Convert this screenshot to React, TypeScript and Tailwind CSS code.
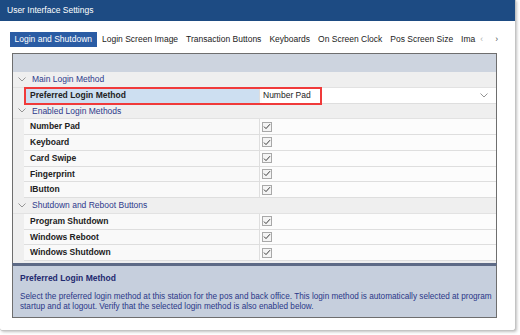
import React from 'react';

const TABS = ['Login Screen Image', 'Transaction Buttons', 'Keyboards', 'On Screen Clock', 'Pos Screen Size', 'Ima'];

type Row =
  | { kind: 'cat'; label: string }
  | { kind: 'prop'; label: string; value?: string; check?: boolean; selected?: boolean };

const ROWS: Row[] = [
  { kind: 'cat', label: 'Main Login Method' },
  { kind: 'prop', label: 'Preferred Login Method', value: 'Number Pad', selected: true },
  { kind: 'cat', label: 'Enabled Login Methods' },
  { kind: 'prop', label: 'Number Pad', check: true },
  { kind: 'prop', label: 'Keyboard', check: true },
  { kind: 'prop', label: 'Card Swipe', check: true },
  { kind: 'prop', label: 'Fingerprint', check: true },
  { kind: 'prop', label: 'IButton', check: true },
  { kind: 'cat', label: 'Shutdown and Reboot Buttons' },
  { kind: 'prop', label: 'Program Shutdown', check: true },
  { kind: 'prop', label: 'Windows Reboot', check: true },
  { kind: 'prop', label: 'Windows Shutdown', check: true },
];

const Chevron = ({ className }: { className?: string }) => (
  <svg width="8" height="5" viewBox="0 0 8 5" className={className}>
    <path d="M0.5 0.5 L4 4 L7.5 0.5" fill="none" stroke="currentColor" strokeWidth="0.9" />
  </svg>
);

const CheckBox = () => (
  <div className="w-[10px] h-[10px] border border-[#a8a8a8] bg-[#f4f4f4] flex items-center justify-center">
    <svg width="8" height="7" viewBox="0 0 8 7">
      <path d="M1 3.6 L3 5.6 L7 1.2" fill="none" stroke="#3c3c3c" strokeWidth="1" />
    </svg>
  </div>
);

export default function App() {
  return (
    <div className="w-[520px] h-[335px] bg-white font-['Liberation_Sans',Arial,sans-serif] text-[8.5px]">
      <div className="w-[516px] h-[331px] bg-white border-r border-b border-[#c4c4c4] rounded-b-[3px] shadow-[1px_1px_3px_rgba(0,0,0,0.25)] flex flex-col">
        {/* Title bar */}
        <div className="h-[21px] bg-[#1d4b83] text-white flex items-center pl-[7px]">User Interface Settings</div>

        {/* Tabs */}
        <div className="flex items-center pl-[10px] mt-[11px] h-[15px] text-[#222]">
          <div className="h-[15px] px-[4.5px] mr-[1.5px] bg-[#2a5ca4] text-white flex items-center">Login and Shutdown</div>
          {TABS.map((t) => (
            <div key={t} className="h-[15px] px-[4px] flex items-center">{t}</div>
          ))}
          <span className="text-[#b0b0b0] ml-[1px]">&lsaquo;</span>
          <span className="text-[#555] ml-[12px]">&rsaquo;</span>
        </div>

        {/* Property grid */}
        <div className="relative ml-[12px] mt-[6px] w-[485px] border-x border-t border-[#6e6e6e] flex flex-col">
          <div className="h-[18px] bg-[#cdd4df]" />
          {ROWS.map((r, i) =>
            r.kind === 'cat' ? (
              <div key={i} className="h-[15.75px] bg-[#efefef] border-b border-[#e2e2e2] flex items-center text-[#2e3a8c]">
                <Chevron className="ml-[5px] mr-[6px] text-[#8a8a8a]" />
                {r.label}
              </div>
            ) : (
              <div key={i} className="h-[15.75px] flex bg-[#efefef]">
                <div
                  className={`w-[236px] ml-[11px] flex items-center pl-[6px] font-bold text-[#222] border-b border-r border-[#dedede] ${
                    r.selected ? 'bg-[#cddff1]' : 'bg-[#f9f9f9]'
                  }`}
                >
                  {r.label}
                </div>
                <div className="flex-1 flex items-center pl-[2px] bg-[#fcfcfc] border-b border-[#dedede]">
                  {r.value ? (
                    <div className="flex-1 h-full bg-white flex items-center justify-between pr-[8px] text-[#222]">
                      <span className="pl-[1px]">{r.value}</span>
                      <Chevron className="text-[#888]" />
                    </div>
                  ) : (
                    <CheckBox />
                  )}
                </div>
              </div>
            )
          )}
          <div className="h-[2px] bg-[#efefef]" />
          {/* Red annotation box */}
          <div className="absolute left-[11px] top-[33px] w-[298px] h-[18px] border-[2.5px] border-[#f03a3a] pointer-events-none" />
        </div>

        {/* Description panel */}
        <div className="ml-[12px] w-[485px] h-[55px] border-x border-b border-[#6e6e6e] border-t-[3px] border-t-[#5d6a86] bg-[#c6cfdd] pl-[7px] pr-[2px] text-[8.2px] text-[#2a3788]">
          <div className="font-bold text-[8.5px] text-[#1f2a70] mt-[6px]">Preferred Login Method</div>
          <div className="mt-[7px] leading-[10px]">
            Select the preferred login method at this station for the pos and back office. This login method is automatically selected at program startup and at logout. Verify that the selected login method is also enabled below.
          </div>
        </div>
      </div>
    </div>
  );
}
